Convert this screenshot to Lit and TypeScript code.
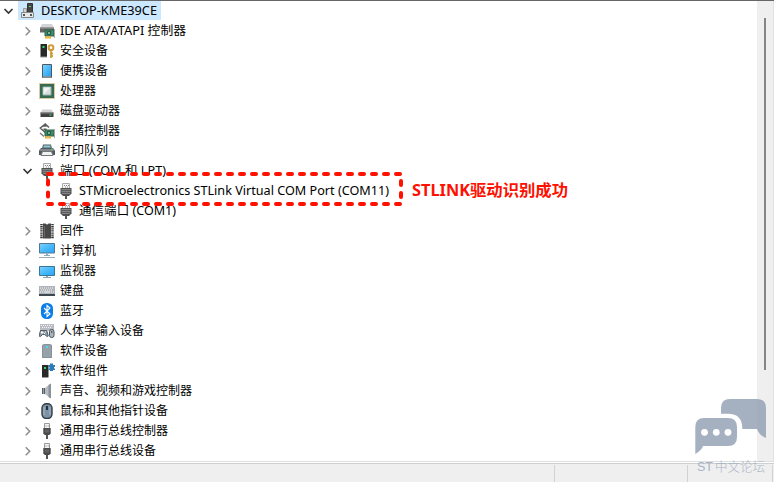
import { LitElement, html, svg, css } from "lit";
import { customElement, property } from "lit/decorators.js";

const usb = svg`<path d="M5.5 .5h5v5h-5z" fill="#f5f5f5" stroke="#999"/><path d="M6.5 2.5h1v1h-1zM8.7 2.5h1v1h-1z" fill="#777"/><path d="M4.3 5h7.4v5.3L10.3 12H5.7L4.3 10.3z" fill="#4b4b4b"/><path d="M7 12h2v4H7z" fill="#555"/><path d="M6 6.5h4v3H6z" fill="#5f6466"/>`;
const port = svg`<path d="M4.5 .5h7v5h-7z" fill="#f4f4f4" stroke="#aaa"/><path d="M6 2h1v1H6zM8 2h1v1H8zM10 2h1v1h-1zM7 3.5h1v1H7zM9 3.5h1v1H9z" fill="#888"/><path d="M2.5 5h11v5.5L11 13H5L2.5 10.5z" fill="#505050"/><path d="M3.5 6h9v1.2h-9zM3.5 8h9v1.2h-9zM4 10h8v1H4z" fill="#858585"/><path d="M7 13h2v3H7z" fill="#555"/>`;
const screen = svg`<defs><linearGradient id="s" x1="0" y1="0" x2="1" y2="1"><stop stop-color="#7ed3ff"/><stop offset=".5" stop-color="#49b9fb"/><stop offset="1" stop-color="#29a3f5"/></linearGradient></defs>`;
const card = svg`<path d="M6 7h9v6H6z" fill="#3f8a68" stroke="#2c6249"/><path d="M8.5 8.5h3v3h-3z" fill="#79b598" stroke="#255841"/><path d="M6 13.5h6v2H6z" fill="#f3a51c"/><path d="M8 13.5v2M10 13.5v2" stroke="#fff0bd" stroke-width=".5"/><path d="M15.5 6v9" stroke="#aaa"/>`;

const glyphs: Record<string, unknown> = {
  root: svg`<path d="M7.5 .5h5v9h-5z" fill="#454545" stroke="#343434"/><path d="M9 3h2v1H9z" fill="#60d879"/><path d="M3.5 9.5V5.5h3v4" fill="#ccd0d2" stroke="#999"/><path d="M1.5 9.5h12v5H1.5z" fill="#e6e8ea" stroke="#888"/><path d="M3 11h2v2H3zM10 11h2v2h-2z" fill="#555"/>`,
  ide: svg`<path d="M3 1h10l2 4H1z" fill="#d2d4d5"/><path d="M1 4.5h14v5H1z" fill="#666"/><path d="M1 5h14" stroke="#999"/>${card}`,
  security: svg`<path d="M1.5 1H8v13H1.5z" fill="#292929"/><path d="M1.5 14H8" stroke="#999"/><path d="M3.5 3h2v2h-2z" fill="#31de5c"/><circle cx="12" cy="4.7" r="2.4" fill="none" stroke="#cf9b3d" stroke-width="2"/><path d="M12 7v8M12 10.5h2M12 13h2" stroke="#cf9b3d" stroke-width="1.8"/>`,
  portable: svg`${screen}<rect x="3" y="1" width="10" height="14" rx="1" fill="#4c5961"/><path d="M4 2h8v11H4z" fill="url(#s)"/><path d="M4 14h8" stroke="#b8c7d0"/>`,
  cpu: svg`<rect x=".5" y=".5" width="15" height="15" fill="none" stroke="#b99543" stroke-dasharray="1 1"/><path d="M1 1h14v14H1z" fill="#356b52"/><path d="M4 4h8v8H4z" fill="#d8dedb" stroke="#9bb3a7"/><path d="M4.5 11.5v-7h7z" fill="#f1f3f2"/>`,
  disk: svg`<path d="M3.5 6.5h9l2 3.5H1.5z" fill="#d0d1d1"/><path d="M1.5 9.5h13V14h-13z" fill="#414141"/><path d="M1.5 10h13" stroke="#888"/><path d="M10.5 11.5h2v1h-2z" fill="#49e578"/>`,
  storage: svg`<path d="M6.5 .8L1.3 5l5 4.5M4 3h3.5M6 .8L10 4.5M4.5 6.2h3" fill="none" stroke="#5c5c5c" stroke-width="1.5"/><path d="M1 10l4 3.5" stroke="#777" stroke-width="1.3"/>${card}`,
  printer: svg`<path d="M4 1.5h8l1 4H3z" fill="#515b60"/><path d="M4.5 2.5h7v2h-7z" fill="#8fd0dc"/><path d="M2 5h12l2 2.5V12H0V7.5z" fill="#555c60"/><path d="M1 7h14" stroke="#aeb5b8"/><path d="M3.5 8.5h9L14 12.5H2z" fill="#eff3f4" stroke="#777"/><path d="M12 5.5h2v1h-2z" fill="#4ad46b"/>`,
  port, usb,
  firmware: svg`<path d="M4 .5h2.5q1.5 2 3 0H12v15H4z" fill="#484848"/><path d="M2.5 1v15M13.5 1v15" stroke="#333" stroke-width="2.5" stroke-dasharray="1.3 .8"/><path d="M5.5 3v11" stroke="#686868"/>`,
  computer: svg`${screen}<path d="M.5 .5h15v9.5H.5z" fill="url(#s)" stroke="#53788e"/><path d="M7 10.5h2V12H7zM5 12h6v1H5z" fill="#8cadc1"/><path d="M0 14.5h16" stroke="#9aabb6"/>`,
  monitor: svg`${screen}<path d="M.5 3.5h15v9H.5z" fill="url(#s)" stroke="#397894"/><path d="M7 13h2v1H7zM4 14h8v1H4z" fill="#8aa4b2"/>`,
  keyboard: svg`<path d="M0 3h16v10H0z" fill="#aeb4b9"/><path d="M0 11h16v2H0z" fill="#3e4851"/><path d="M1 5h14M2 7h12M1 9h3M12 9h3" stroke="#f7f7f7" stroke-dasharray="1 1"/><path d="M5 9h6" stroke="#f7f7f7"/>`,
  bluetooth: svg`<rect x="2" y="0" width="12" height="16" rx="5.5" fill="#087eea"/><path d="M5 5l6 6-3 2.5v-11L11 5l-6 6" fill="none" stroke="#fff" stroke-width="1.1"/>`,
  hid: svg`<path d="M1 1h14v7H1z" fill="#b9bdc1"/><path d="M2 2.5h12M3 4.5h10" stroke="#f5f5f5" stroke-dasharray="1 1"/><path d="M1.5 7.5h6.2l1.6 5.5-1.5.5-2-2H3.5l-2 2L0 13z" fill="#8a98a2" stroke="#535d65"/><path d="M3 8v3M1.7 9.5h2.8M6 9h1M5 10.5h1" stroke="#fff"/><rect x="10.5" y="6.5" width="4.5" height="8" rx="2" fill="#aab5bd" stroke="#4b555d"/><path d="M12.8 8v2" stroke="#444"/>`,
  software: svg`<path d="M3 2l2-1h6l2 1v13H3z" fill="#87939b"/><path d="M4 2h8v12H4z" fill="#97a1a8"/><path d="M7 3h2v2H7z" fill="#49dcf0"/>`,
  component: svg`<path d="M3 2h6.5v12H3z" fill="#292929"/><path d="M3 14.5h6.5" stroke="#999"/><path d="M5 4h2v2H5z" fill="#27dd5c"/><path d="M9.5 2H11V.5h3V2h2v2h-1v1.5h1V7h-2v1h-3V7H9.5V5.5h1V4h-1z" fill="#2c7cbc"/>`,
  sound: svg`<path d="M3 5h3v6H3z" fill="#596067"/><path d="M6 5l5-4v14l-5-4z" fill="#b7bcc0"/><path d="M9.5 2L12 .5v15L9.5 14z" fill="#8a9298"/><path d="M4.5 5v6" stroke="#929ba1"/>`,
  mouse: svg`<rect x="3" y=".7" width="10" height="14.8" rx="4.4" fill="#7c91a3" stroke="#343c43" stroke-width="1.4"/><path d="M5 4v8M11 4v8" stroke="#a4b8c8"/><path d="M8 3v4" stroke="#26313a" stroke-width="2"/>`,
};

type Row = [icon: string, label: string, depth: number, state: string, width: number];
const rows: Row[] = [
  ["root", "DESKTOP-KME39CE", 0, "open", 116],
  ["ide", "IDE ATA/ATAPI 控制器", 1, "closed", 126],
  ["security", "安全设备", 1, "closed", 48], ["portable", "便携设备", 1, "closed", 48],
  ["cpu", "处理器", 1, "closed", 36], ["disk", "磁盘驱动器", 1, "closed", 60],
  ["storage", "存储控制器", 1, "closed", 60], ["printer", "打印队列", 1, "closed", 48],
  ["port", "端口 (COM 和 LPT)", 1, "open", 106],
  ["port", "STMicroelectronics STLink Virtual COM Port (COM11)", 2, "", 310],
  ["port", "通信端口 (COM1)", 2, "", 97],
  ["firmware", "固件", 1, "closed", 24], ["computer", "计算机", 1, "closed", 36],
  ["monitor", "监视器", 1, "closed", 36], ["keyboard", "键盘", 1, "closed", 24],
  ["bluetooth", "蓝牙", 1, "closed", 24], ["hid", "人体学输入设备", 1, "closed", 84],
  ["software", "软件设备", 1, "closed", 48], ["component", "软件组件", 1, "closed", 48],
  ["sound", "声音、视频和游戏控制器", 1, "closed", 132], ["mouse", "鼠标和其他指针设备", 1, "closed", 108],
  ["usb", "通用串行总线控制器", 1, "closed", 108], ["usb", "通用串行总线设备", 1, "closed", 96],
];

@customElement("tree-row")
class TreeRow extends LitElement {
  @property({ attribute: false }) row!: Row;
  static styles = css`
    :host { display: block; height: 20px; }
    .row { display: flex; align-items: center; height: 20px; }
    .d1 { padding-left: 19px; }
    .d2 { padding-left: 38px; }
    .chevron { width: 18px; height: 20px; flex: none; fill: none; stroke: #919191; stroke-width: 1.6; }
    .open { stroke: #333; }
    .item { display: flex; align-items: center; height: 20px; }
    .selected { background: #cce8ff; padding-right: 4px; }
    .icon { width: 16px; height: 16px; margin: 2px 5px 0 2px; flex: none; }
    .label { display: block; height: 20px; overflow: visible; fill: #000; font: 12px "Noto Sans", "Noto Sans CJK SC", sans-serif; }
  `;
  render() {
    const [icon, label, depth, state, width] = this.row;
    return html`<div class="row d${depth}">
      <svg class="chevron ${state}" viewBox="0 0 18 20">${state === "open"
        ? svg`<path d="M4.5 9l4 4 4-4"/>` : state ? svg`<path d="M6.7 7.3l4 4-4 4"/>` : ""}</svg>
      <div class="item ${depth === 0 ? "selected" : ""}">
        <svg class="icon" viewBox="0 0 16 16">${glyphs[icon]}</svg>
        <svg class="label" width=${width} height="20"><text x="0" y="15" textLength=${width}
          lengthAdjust="spacingAndGlyphs">${label}</text></svg>
      </div>
    </div>`;
  }
}

@customElement("app-root")
class AppRoot extends LitElement {
  static styles = css`
    :host { display: block; width: 774px; height: 482px; }
    .window { position: relative; display: flex; flex-direction: column; box-sizing: border-box; height: 482px; overflow: hidden; border-top: 1px solid #666; background: #fff; }
    .main { display: flex; height: 461px; }
    .tree { flex: 1; margin-top: -1px; }
    .scroll { width: 16px; background: #efefef; border-right: 1px solid #e2e2e2; display: flex; justify-content: center; }
    .thumb { width: 2px; height: 352px; margin-top: 17px; background: #858585; }
    .status { flex: 1; box-sizing: border-box; border-top: 1px solid #dedede; }
    .bar { display: flex; height: 18px; margin-top: 1px; border-top: 1px solid #cfcfcf; background: #efefef; }
    .cell { box-sizing: border-box; border-right: 1px solid #d2d2d2; margin-top: 1px; }
    .c1 { width: 555px; } .c2 { width: 133px; } .c3 { width: 85px; }
    .mark { position: absolute; left: 0; top: -1px; width: 774px; height: 482px; }
    .dash { fill: none; stroke: #fe1100; stroke-width: 4; stroke-linecap: round; }
    .note { fill: #fe1100; font: bold 16px "Noto Sans", "Noto Sans CJK SC", sans-serif; }
    .bubble { fill: #8e9eb0; fill-opacity: .8; }
    .dot { fill: #fff; }
    .brand { fill: #a9b5c4; font: 300 13px "Liberation Sans", "Noto Sans CJK SC", sans-serif; }
  `;
  render() {
    return html`<div class="window">
      <div class="main">
        <div class="tree">${rows.map(row => html`<tree-row .row=${row}></tree-row>`)}</div>
        <div class="scroll"><div class="thumb"></div></div>
      </div>
      <div class="status"><div class="bar"><div class="cell c1"></div><div class="cell c2"></div><div class="cell c3"></div></div></div>
      <svg class="mark" viewBox="0 0 774 482">
        <path class="dash" stroke-dasharray="4 8" d="M48 174H401M48 204H401"/>
        <path class="dash" stroke-dasharray="4 8" d="M48 180.5V198M401 181V199"/>
        <text class="note" x="412" y="196" textLength="156" lengthAdjust="spacingAndGlyphs">STLINK驱动识别成功</text>
        <path class="bubble" d="M721 413.7V408Q721 399 730 399H757Q766 399 766 408V438Q759 435 757 429H742.3Q742.5 413.7 728 413.7Z"/>
        <path class="bubble" d="M704 418H728Q737 418 737 427V437Q737 446 728 446H703Q702 450 695.3 454V427Q695.3 418 704 418Z"/>
        <circle class="dot" cx="704.5" cy="432.3" r="3.4"/><circle class="dot" cx="716.3" cy="432.3" r="3.4"/><circle class="dot" cx="728" cy="432.3" r="3.4"/>
        <text class="brand" x="697" y="471" textLength="16" lengthAdjust="spacingAndGlyphs">ST</text>
        <text class="brand" x="715" y="471" textLength="50" lengthAdjust="spacingAndGlyphs">中文论坛</text>
      </svg>
    </div>`;
  }
}
